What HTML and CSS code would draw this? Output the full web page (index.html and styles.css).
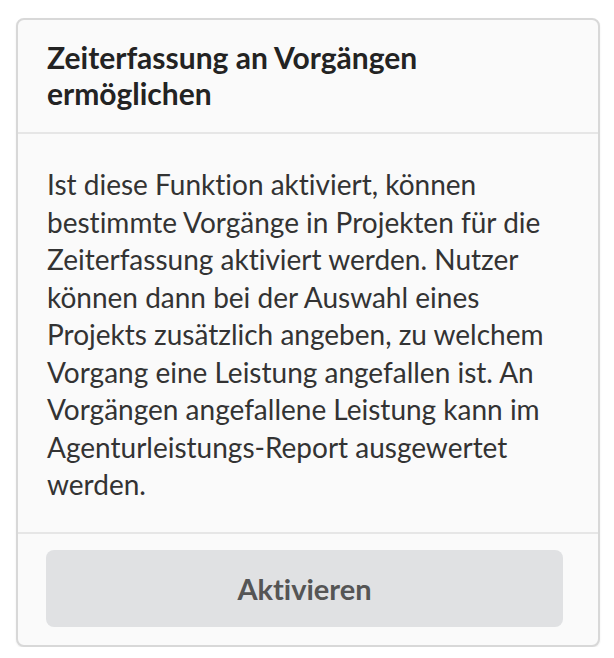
FILE: index.html
```html
<!DOCTYPE html>
<html lang="de">
<head>
<meta charset="utf-8">
<link rel="stylesheet" href="styles.css">
</head>
<body>
<div class="card">
  <div class="card-header">
    <h2 class="card-title">Zeiterfassung an Vorgängen ermöglichen</h2>
  </div>
  <div class="card-body">
    <p>Ist diese Funktion aktiviert, können bestimmte Vorgänge in Projekten für die Zeiterfassung aktiviert werden. Nutzer können dann bei der Auswahl eines Projekts zusätzlich angeben, zu welchem Vorgang eine Leistung angefallen ist. An Vorgängen angefallene Leistung kann im Agenturleistungs-Report ausgewertet werden.</p>
  </div>
  <div class="card-footer">
    <button class="btn" type="button">Aktivieren</button>
  </div>
</div>
</body>
</html>
```

FILE: styles.css
```css
html, body {
  margin: 0;
  background: #ffffff;
}
body {
  padding: 18px 14px 0 16px;
  font-family: Lato, "Open Sans", sans-serif;
  font-variant-ligatures: none;
}
.card {
  background: #fafafa;
  border: 2px solid #d8d8d8;
  border-radius: 8px;
  box-shadow: 0 1px 2px rgba(0,0,0,0.08);
}
.card-header {
  padding: 19px 29px 21px;
  border-bottom: 2px solid #e6e6e6;
}
.card-title {
  margin: 0;
  font-size: 30px;
  line-height: 36px;
  font-weight: 700;
  color: #232323;
}
.card-body {
  padding: 32px 29px 28px;
  border-bottom: 2px solid #e6e6e6;
}
.card-body p {
  margin: 0;
  font-size: 28px;
  line-height: 37.5px;
  color: #333333;
}
.card-footer {
  padding: 16px 35px 18px 28px;
}
.btn {
  display: block;
  width: 100%;
  height: 77px;
  border: none;
  border-radius: 8px;
  background: #e0e1e3;
  color: #555555;
  font-family: Lato, "Open Sans", sans-serif;
  font-variant-ligatures: none;
  font-size: 29px;
  font-weight: 700;
}
```
